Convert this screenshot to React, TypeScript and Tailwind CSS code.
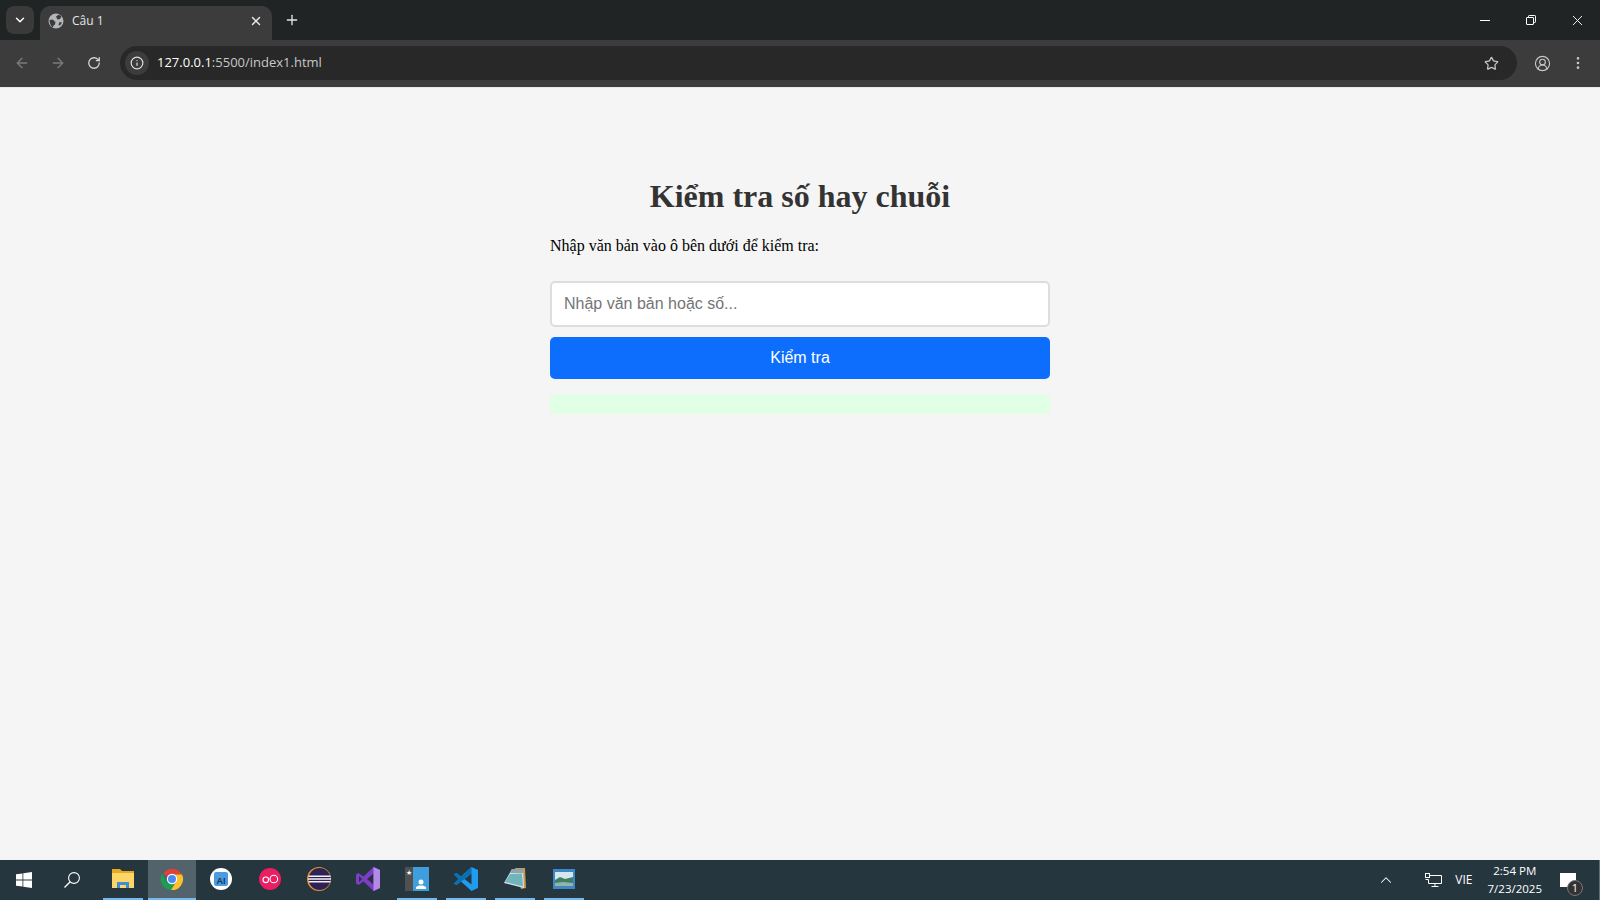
import { ArrowLeft, ArrowRight, ChevronDown, ChevronUp, CircleUserRound, EllipsisVertical, Info, Plus, RotateCw, Star, X } from "lucide-react";

const GlobeIcon = () => (
  <svg width="16" height="16" viewBox="0 0 16 16" className="shrink-0">
    <circle cx="8" cy="8" r="7.500" fill="#b4b7b9" />
    <path d="M8 3.500l3-2 2.500 2-1.500 2.500-2.500.5zM1.500 7l3-.5 3 2.500-.5 2.500-1.500 1-.5 2C3 13.500 1.500 10.500 1.500 7zM11.500 9l2.500.5-2 3-1.500-.5z" fill="#3c3c3c" />
  </svg>
);

const WindowsLogo = () => (
  <svg width="16" height="16" viewBox="0 0 16 16" fill="#fff">
    <path d="M0 2.300l6.500-.9v6.200H0zM7.300 1.300L16 0v7.600H7.300zM0 8.400h6.500v6.200L0 13.700zM7.300 8.400H16V16l-8.700-1.200z" />
  </svg>
);

const SearchIcon = () => (
  <svg width="16" height="16" viewBox="0 0 16 16" fill="none" stroke="#fff" strokeWidth="1.100">
    <circle cx="10" cy="6" r="5.400" />
    <path d="M6.200 9.800L.5 15.500" strokeWidth="1.300" />
  </svg>
);

const ExplorerIcon = () => (
  <svg width="24" height="22" viewBox="0 0 24 22">
    <path d="M1 1h8l2 2h12v17H1z" fill="#e8a920" />
    <path d="M1 5h22v15H1z" fill="#fcd667" />
    <path d="M6 20v-6h12v6h-3v-3H9v3z" fill="#3b8fd6" />
  </svg>
);

const ChromeIcon = () => (
  <svg width="24" height="24" viewBox="0 0 24 24">
    <path d="M12 12L3.300 6.700A11 11 0 0 1 22 7.400H12z" fill="#dd4437" />
    <path d="M12 12l-5 3.500-4.900-9A11 11 0 0 0 11 23l4-7z" fill="#1b9e54" />
    <path d="M12 7.400h10A11 11 0 0 1 11 23l5-8z" fill="#fbc02d" />
    <circle cx="12" cy="12" r="5.200" fill="#fff" />
    <circle cx="12" cy="12" r="4" fill="#4a8af4" />
  </svg>
);

const AiIcon = () => (
  <div className="flex h-[22px] w-[22px] items-center justify-center rounded-full bg-white">
    <div className="flex h-[14px] w-[14px] items-end justify-center rounded-[2px] bg-[#4a9be0] font-['Liberation_Sans',sans-serif] text-[9px] leading-[10px] font-bold text-[#13315c]">
      AI
    </div>
  </div>
);

const RedCircleIcon = () => (
  <svg width="22" height="22" viewBox="0 0 22 22">
    <circle cx="11" cy="11" r="11" fill="#e91e63" />
    <circle cx="6.800" cy="11.800" r="2.800" fill="none" stroke="#fff" strokeWidth="1.100" />
    <circle cx="14.800" cy="11" r="3.800" fill="none" stroke="#fff" strokeWidth="1.100" />
  </svg>
);

const EclipseIcon = () => (
  <svg width="24" height="24" viewBox="0 0 24 24">
    <circle cx="12" cy="12" r="12" fill="#e8932c" />
    <circle cx="12.500" cy="12" r="11" fill="#2c2255" />
    <path d="M1.500 8.500h22v1.500h-22zM1 11.200h23v1.600H1zM1.500 14h22v1.500h-22z" fill="#f3f1fa" />
  </svg>
);

const VisualStudioIcon = () => (
  <svg width="24" height="24" viewBox="0 0 24 24">
    <path d="M17.500 0L24 3v18l-6.500 3-10-9.500L2.500 18 0 16.500v-9L2.500 6l5 3.500z" fill="#7a3fc4" />
    <path d="M17.500 6.500L11 12l6.500 5.500zM3 9v6l3-3z" fill="#2a2f46" />
    <path d="M17.500 0L24 3v18l-6.500 3z" fill="#b38ae8" />
  </svg>
);

const ContactsIcon = () => (
  <div className="flex h-6 w-6">
    <div className="flex h-full w-2 justify-center bg-[#505050] pt-[2px] text-[7px] leading-none text-white">★</div>
    <div className="flex h-full w-4 items-end justify-center bg-[#3f9fdc] pb-[2px]">
      <svg width="10" height="10" viewBox="0 0 10 10" fill="#fff">
        <circle cx="5" cy="3" r="2.500" />
        <path d="M0 10V8l3-1.500h4L10 8v2z" />
      </svg>
    </div>
  </div>
);

const VsCodeIcon = () => (
  <svg width="24" height="24" viewBox="0 0 24 24">
    <path d="M17.500 0L24 3v18l-6.500 3L7 14.500 2.500 18 0 16.500 4.500 12 0 7.500 2.500 6 7 9.500z" fill="#1f9cf0" />
    <path d="M17.500 6.500L10.500 12l7 5.500z" fill="#26363f" />
    <path d="M17.500 0L7 9.500 2.500 6 0 7.500 4.500 12 0 16.500 2.500 18 7 14.500 10.500 12l7-5.500z" fill="#0a70b5" />
  </svg>
);

const NotepadIcon = () => (
  <svg width="24" height="24" viewBox="0 0 24 24">
    <path d="M12 1h10l1 20-5 1z" fill="#c99a4a" />
    <path d="M9 2h11l1 19L1 16z" fill="#d7e6ea" />
    <path d="M9 2h11l.5 4H7z" fill="#8fa4ad" />
    <path d="M7 7l12-.5 1 13L2 15z" fill="#6fb5bb" />
  </svg>
);

const PhotosIcon = () => (
  <svg width="22" height="20" viewBox="0 0 22 20">
    <rect width="22" height="20" fill="#3f86c6" />
    <rect x="2" y="3" width="18" height="14" fill="#d5e8ee" />
    <path d="M2 11l5-3 5 2 8-2v9H2z" fill="#3f7f6a" />
    <path d="M2 14l8-1 10 1v3H2z" fill="#8fb6a8" />
  </svg>
);

const NetworkIcon = () => (
  <svg width="17" height="15" viewBox="0 0 17 15" fill="none" stroke="#fff" strokeWidth="1">
    <path d="M4.500 2.500H16.500V10.500H3.500V6.500M10 10.500V13.500M6.500 13.500H13.500" />
    <rect x="0.500" y="0.500" width="4" height="4" />
    <path d="M0.500 6.500H3.500" />
  </svg>
);

const RestoreIcon = () => (
  <svg width="10" height="10" viewBox="0 0 10 10" fill="none" stroke="#fff" strokeWidth="1">
    <rect x="0.500" y="2.500" width="7" height="7" rx="0.500" />
    <path d="M2.500 2.500V1.200q0-.7.7-.7h5.600q.7 0 .7.7v5.600q0 .7-.7.7H7.500" />
  </svg>
);

const taskbarApps = [
  { icon: <AiIcon />, underline: false },
  { icon: <RedCircleIcon />, underline: false },
  { icon: <EclipseIcon />, underline: false },
  { icon: <VisualStudioIcon />, underline: false },
  { icon: <ContactsIcon />, underline: true },
  { icon: <VsCodeIcon />, underline: true },
  { icon: <NotepadIcon />, underline: true },
  { icon: <PhotosIcon />, underline: true },
];

function BrowserBar() {
  return (
    <header className="flex flex-col font-['Open_Sans',sans-serif]">
      <div className="flex h-10 items-end bg-[#202424]">
        <div className="mb-[6px] ml-[6px] flex h-7 w-[28px] items-center justify-center rounded-lg bg-[#3a3a3a] text-white">
          <ChevronDown size={14} strokeWidth={2.5} />
        </div>
        <div className="ml-[6px] flex h-[34px] w-[232px] items-center rounded-t-[10px] bg-[#3c3c3c] pr-[9px] pb-[5px] pl-[8px]">
          <GlobeIcon />
          <span className="ml-[8px] flex-1 text-xs text-[#e4e4e4]">Câu 1</span>
          <X size={14} strokeWidth={2.5} className="text-[#e8e8e8]" />
        </div>
        <div className="mb-[6px] ml-[6px] flex h-7 w-7 items-center justify-center text-[#e4e4e4]">
          <Plus size={16} strokeWidth={2} />
        </div>
        <div className="mb-[6px] ml-auto flex h-[28px] items-center text-white">
          <div className="flex w-[46px] justify-center"><div className="h-px w-[10px] bg-white" /></div>
          <div className="flex w-[46px] justify-center"><RestoreIcon /></div>
          <div className="flex w-[46px] justify-center"><X size={17} strokeWidth={1.3} /></div>
        </div>
      </div>
      <div className="flex h-[48px] items-center border-b border-[#e8e8e8] bg-[#3c3c3c] px-[6px] pb-[1px]">
        <div className="flex w-[32px] justify-center text-[#7b7b7b]"><ArrowLeft size={16} /></div>
        <div className="ml-[4px] flex w-[32px] justify-center text-[#7b7b7b]"><ArrowRight size={16} /></div>
        <div className="ml-[4px] flex w-[32px] justify-center text-[#d6d6d6]"><RotateCw size={14} strokeWidth={2.2} /></div>
        <div className="ml-[10px] flex h-[34px] flex-1 items-center rounded-full bg-[#282828] pl-[5px]">
          <div className="flex h-6 w-6 items-center justify-center rounded-full bg-[#3c3c3c] text-[#e0e0e0]">
            <Info size={14} />
          </div>
          <span className="ml-[8px] flex-1 font-['Open_Sans',sans-serif] text-[13px] text-[#c7c7c7]">
            <span className="text-white">127.0.0.1</span>:5500/index1.html
          </span>
          <Star size={15} strokeWidth={2} className="mr-[18px] text-[#c7c7c7]" />
        </div>
        <div className="ml-[9px] flex w-[32px] justify-center text-[#c7c7c7]"><CircleUserRound size={17} strokeWidth={1.6} /></div>
        <div className="ml-[4px] flex w-[32px] justify-center text-[#c7c7c7]"><EllipsisVertical size={16} strokeWidth={2} /></div>
      </div>
    </header>
  );
}

function Taskbar() {
  return (
    <footer className="flex h-10 items-stretch bg-[#26363f] text-white">
      <div className="flex w-12 items-center justify-center"><WindowsLogo /></div>
      <div className="flex w-12 items-center justify-center"><SearchIcon /></div>
      <div className="ml-[7px] flex w-[40px] items-center justify-center border-b-2 border-[#76b9ed]"><ExplorerIcon /></div>
      <div className="ml-[5px] flex w-[48px] items-center justify-center border-b-2 border-[#76b9ed] bg-[#52636b]"><ChromeIcon /></div>
      <div className="-ml-[4px] flex">
        {taskbarApps.map((app, i) => (
          <div key={i} className={`ml-[9px] flex w-[40px] items-center justify-center border-b-2 ${app.underline ? "border-[#76b9ed]" : "border-transparent"}`}>
            {app.icon}
          </div>
        ))}
      </div>
      <div className="ml-auto flex items-center font-['Open_Sans',sans-serif] text-xs">
        <ChevronUp size={18} strokeWidth={1.4} className="mr-[30px]" />
        <NetworkIcon />
        <span className="ml-[13px] text-[12px]">VIE</span>
        <div className="ml-[15px] flex flex-col items-center text-[11.5px] leading-[18px]">
          <span>2:54 PM</span>
          <span>7/23/2025</span>
        </div>
        <div className="relative mr-[23px] ml-[18px] h-[14px] w-[16px] bg-white">
          <div className="absolute top-[7px] left-[7px] flex h-[16px] w-[16px] items-center justify-center rounded-full border border-[#777] bg-[#333] text-[11px]">1</div>
        </div>
        <div className="h-full w-px bg-[#5f6f78]" />
      </div>
    </footer>
  );
}

export default function App() {
  return (
    <div className="flex h-[900px] flex-col overflow-hidden bg-[#f5f5f5]">
      <BrowserBar />
      <main className="flex flex-1 justify-center pt-[90px] font-['Liberation_Serif',serif]">
        <div className="flex w-[500px] flex-col">
          <h1 className="text-center text-[32px] leading-[37px] font-bold text-[#333]">Kiểm tra số hay chuỗi</h1>
          <p className="mt-[22px] text-base leading-[18px] text-black">Nhập văn bản vào ô bên dưới để kiểm tra:</p>
          <input
            type="text"
            placeholder="Nhập văn bản hoặc số..."
            className="mt-[26px] h-[46px] w-full rounded-[5px] border-2 border-[#ddd] bg-white px-3 font-['Liberation_Sans',sans-serif] text-base outline-none placeholder:text-[#757575]"
          />
          <button className="mt-[10px] h-[42px] w-full rounded-[5px] bg-[#0d6efd] font-['Liberation_Sans',sans-serif] text-base text-white">
            Kiểm tra
          </button>
          <div className="mt-[15px] h-5 rounded-[5px] bg-[#e0ffe5]" />
        </div>
      </main>
      <Taskbar />
    </div>
  );
}
